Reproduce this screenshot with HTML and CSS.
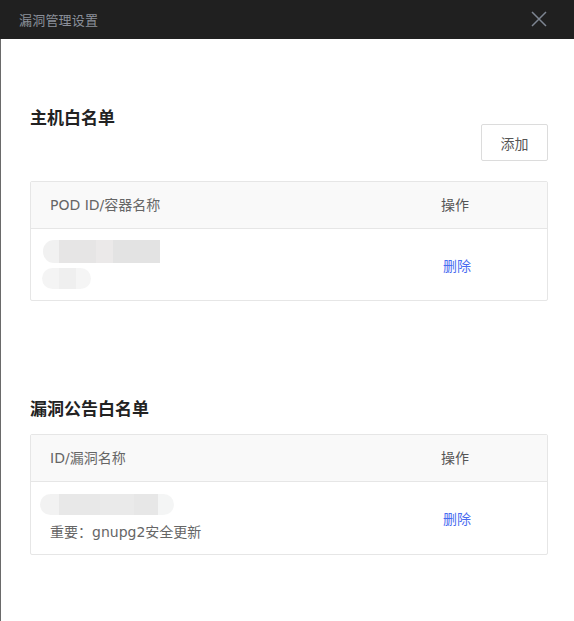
FILE: index.html
```html
<!DOCTYPE html>
<html lang="zh">
<head>
<meta charset="utf-8">
<title>漏洞管理设置</title>
<link rel="stylesheet" href="styles.css">
</head>
<body>
<div class="dialog">
  <header class="dlg-head">
    <span class="dlg-title">漏洞管理设置</span>
    <svg class="close" width="16" height="16" viewBox="0 0 16 16"><path d="M1 1 L15 15 M15 1 L1 15" stroke="#7d8591" stroke-width="1.5" fill="none"/></svg>
  </header>
  <main class="content">
    <section class="sec sec-host">
      <h2 class="sec-title">主机白名单</h2>
      <div class="toolbar"><button class="btn">添加</button></div>
      <div class="table">
        <div class="row head">
          <div class="cell">POD ID/容器名称</div>
          <div class="cell op">操作</div>
        </div>
        <div class="row body body1">
          <div class="cell stack">
            <div class="blur b1"></div>
            <div class="blur b2"></div>
          </div>
          <div class="cell op"><a class="link">删除</a></div>
        </div>
      </div>
    </section>
    <section class="sec sec-vuln">
      <h2 class="sec-title">漏洞公告白名单</h2>
      <div class="table">
        <div class="row head">
          <div class="cell">ID/漏洞名称</div>
          <div class="cell op">操作</div>
        </div>
        <div class="row body body2">
          <div class="cell stack">
            <div class="blur b3"></div>
            <div class="txt">重要：gnupg2安全更新</div>
          </div>
          <div class="cell op"><a class="link">删除</a></div>
        </div>
      </div>
    </section>
  </main>
</div>
</body>
</html>
```
FILE: styles.css
```css
html, body {
  margin: 0;
  padding: 0;
  background: #fff;
}
body {
  font-family: "DejaVu Sans", "Noto Sans CJK SC", sans-serif;
  color: #666;
}
.dialog {
  width: 574px;
  height: 621px;
  display: flex;
  flex-direction: column;
}
.dlg-head {
  height: 39px;
  background: #202020;
  display: flex;
  align-items: center;
  justify-content: space-between;
  padding: 0 27px 0 19px;
  flex-shrink: 0;
}
.dlg-title {
  font-family: "Noto Sans CJK SC", sans-serif;
  font-size: 13px;
  color: #8b909a;
  line-height: 1;
  letter-spacing: 0.2px;
}
.close {
  display: block;
  margin-top: -2px;
}
.content {
  flex: 1;
  border-left: 1px solid #6a6a6a;
  padding: 0 26px 0 29px;
}
.sec-title {
  margin: 0;
  font-family: "Noto Sans CJK SC", sans-serif;
  font-size: 17px;
  line-height: 18px;
  font-weight: 700;
  color: #222;
}
.sec-host {
  padding-top: 69px;
}
.sec-vuln {
  padding-top: 98px;
}
.toolbar {
  display: flex;
  justify-content: flex-end;
  margin-top: -2px;
}
.btn {
  width: 67px;
  height: 37px;
  border: 1px solid #dcdcdc;
  border-radius: 2px;
  background: #fff;
  font-family: "Noto Sans CJK SC", sans-serif;
  font-size: 14px;
  color: #555;
  padding: 0;
  cursor: pointer;
}
.sec-host .table {
  margin-top: 20px;
}
.sec-vuln .table {
  margin-top: 17px;
}
.table {
  border: 1px solid #e6e6e6;
  border-radius: 2px;
}
.row {
  display: grid;
  grid-template-columns: 1fr 106px;
  align-items: center;
  line-height: 20px;
}
.row.head {
  height: 46px;
  background: #f9f9f9;
  border-bottom: 1px solid #e6e6e6;
  font-size: 14px;
  color: #666;
}
.row.head .op {
  color: #555;
}
.cell {
  padding-left: 19px;
}
.cell.op {
  padding-left: 0;
  display: flex;
  align-items: center;
}
.body1 {
  height: 71px;
}
.body2 {
  height: 72px;
}
.stack {
  display: flex;
  flex-direction: column;
  align-items: flex-start;
}
.body2 .stack {
  padding-bottom: 3px;
}
.blur {
  border-radius: 11px;
}
.b1 {
  width: 117px;
  height: 23px;
  margin-left: -7px;
  background: linear-gradient(90deg, #f1f1f1 0 14%, #e6e5e5 14% 45%, #ebe9e9 45% 60%, #e3e3e3 60% 100%);
  border-radius: 11px 0 0 11px;
}
.b2 {
  width: 49px;
  height: 21px;
  margin-left: -8px;
  margin-top: 5px;
  background: linear-gradient(90deg, #f4f4f4 0 35%, #efefef 35% 70%, #f5f5f5 70% 100%);
}
.b3 {
  width: 134px;
  height: 21px;
  margin-left: -10px;
  margin-top: 1px;
  background: linear-gradient(90deg, #f2f2f2 0 14%, #e8e8e8 14% 45%, #eaeaea 45% 70%, #e7e7e7 70% 88%, #f4f5f5 88% 100%);
}
.txt {
  margin-top: 8px;
  font-size: 14px;
  line-height: 18px;
  color: #666;
}
.link {
  font-family: "Noto Sans CJK SC", sans-serif;
  font-size: 14px;
  line-height: 20px;
  color: #4a6cf0;
  cursor: pointer;
  margin-left: 2px;
}
```
